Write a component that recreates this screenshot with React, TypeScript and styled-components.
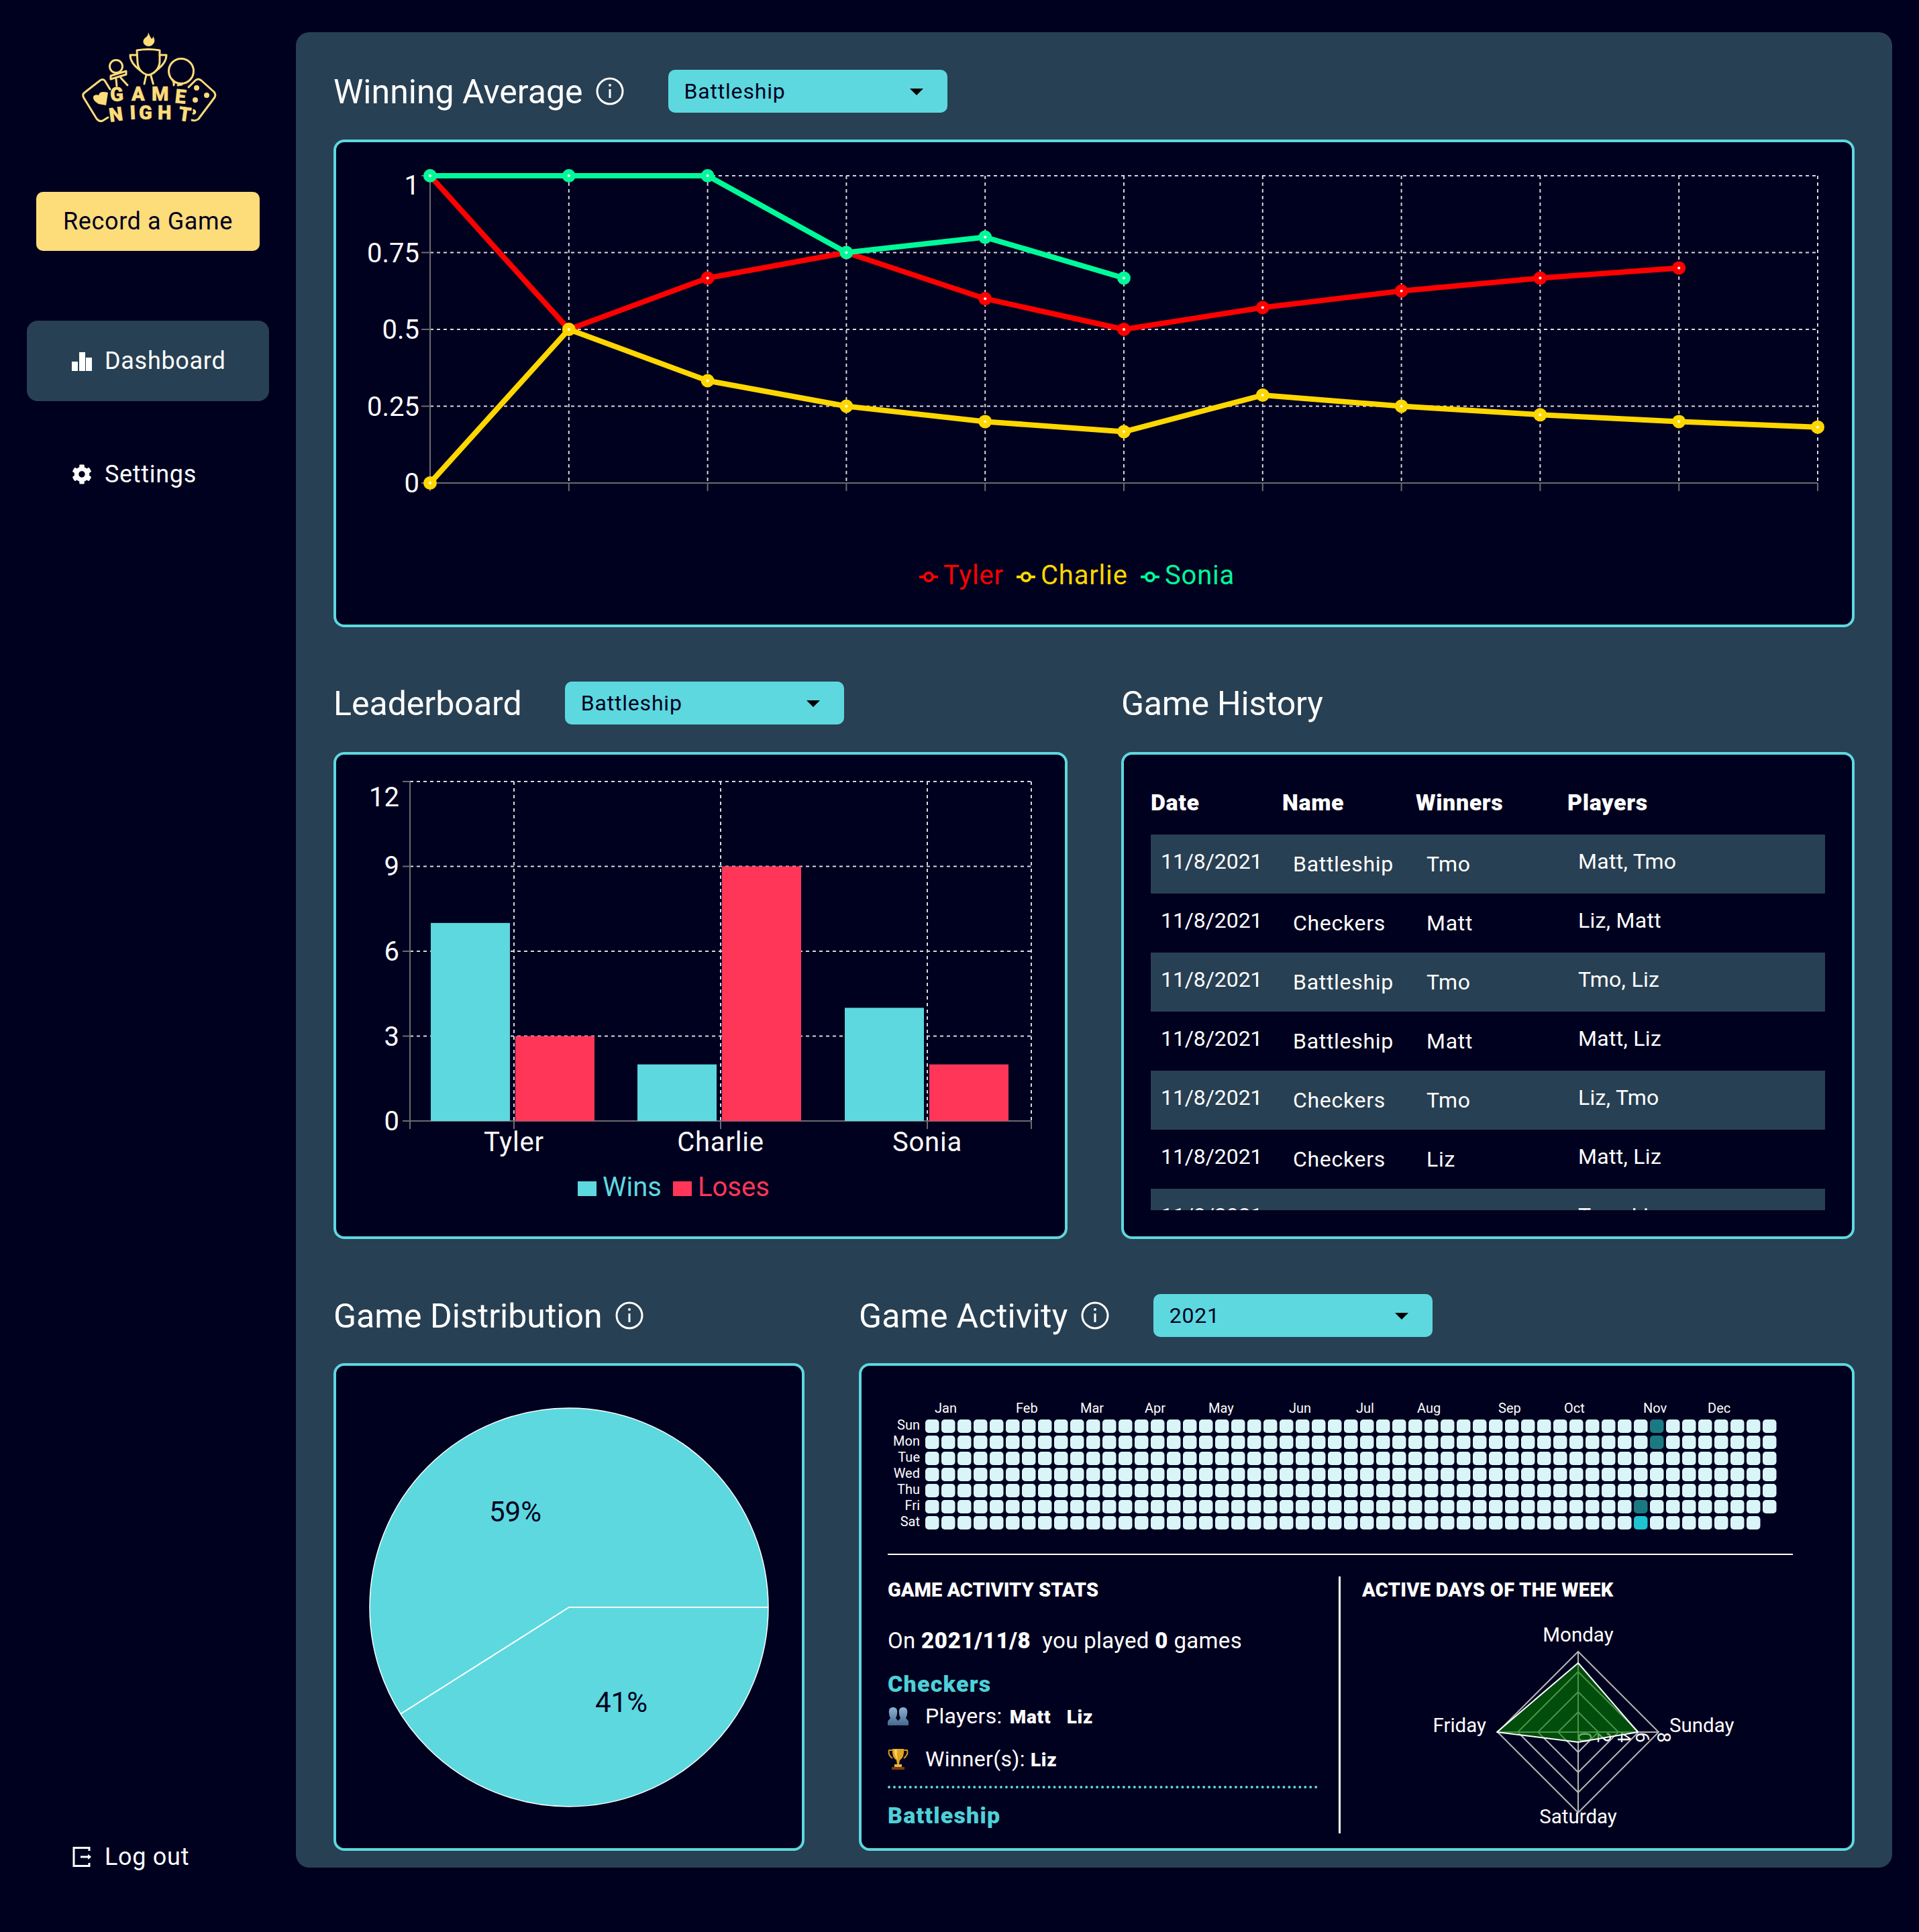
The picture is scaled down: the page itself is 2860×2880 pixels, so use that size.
import React from 'react';
import styled, { createGlobalStyle } from 'styled-components';
import { FaCog } from 'react-icons/fa';

const NAVY = '#00001f';
const SLATE = '#284053';
const TEAL = '#5dd8df';
const YELLOW = '#fddc7a';
const FONT = 'Roboto, "Open Sans", sans-serif';

const GlobalStyle = createGlobalStyle`
  html, body {
    margin: 0;
    padding: 0;
    background: ${NAVY};
    font-family: ${FONT};
    color: #fff;
  }
  * {
    box-sizing: border-box;
  }
`;

const Page = styled.div`
  display: flex;
  width: 2860px;
  height: 2880px;
  background: ${NAVY};
`;

const Sidebar = styled.aside`
  width: 441px;
  flex-shrink: 0;
  display: flex;
  flex-direction: column;
  padding: 30px 40px 52px 40px;
`;

const LogoBox = styled.div`
  height: 186px;
  display: flex;
  justify-content: center;
`;

const RecordButton = styled.button`
  width: 333px;
  height: 88px;
  margin: 70px 0 0 14px;
  border: 0;
  border-radius: 10px;
  background: ${YELLOW};
  color: ${NAVY};
  font-family: ${FONT};
  font-size: 36px;
  letter-spacing: 0.6px;
`;

const NavItem = styled.div<{ $active?: boolean }>`
  display: flex;
  align-items: center;
  gap: 19px;
  height: 120px;
  padding-left: 67px;
  border-radius: 16px;
  font-size: 36px;
  letter-spacing: 0.7px;
  background: ${(p) => (p.$active ? SLATE : 'transparent')};
  margin-top: ${(p) => (p.$active ? '104px' : '49px')};
  svg {
    width: 30px;
    height: 30px;
    flex-shrink: 0;
  }
`;

const LogoutItem = styled(NavItem)`
  margin-top: auto;
`;

const Panel = styled.main`
  width: 2379px;
  height: 2736px;
  margin-top: 48px;
  padding: 56px 56px 25px 56px;
  background: ${SLATE};
  border-radius: 20px;
`;

const Section = styled.section<{ $bottom: number }>`
  margin-bottom: ${(p) => p.$bottom}px;
`;

const Split = styled.div<{ $left: number; $gap: number }>`
  display: grid;
  grid-template-columns: ${(p) => p.$left}px 1fr;
  column-gap: ${(p) => p.$gap}px;
`;

const HeadRow = styled.div<{ $bottom: number }>`
  display: flex;
  align-items: center;
  height: 64px;
  margin-bottom: ${(p) => p.$bottom}px;
`;

const Title = styled.h2<{ $gap?: number; $spacing?: number }>`
  margin: 1px ${(p) => p.$gap ?? 0}px 0 0;
  font-size: 50px;
  font-weight: 400;
  letter-spacing: ${(p) => p.$spacing ?? 0}px;
  line-height: 62px;
  white-space: nowrap;
`;

const InfoMark = styled.svg`
  width: 42px;
  height: 42px;
  margin-left: 19px;
  margin-right: 66px;
  flex-shrink: 0;
`;

const Select = styled.div`
  position: relative;
  width: 416px;
  height: 64px;
  padding-left: 24px;
  border-radius: 10px;
  background: ${TEAL};
  color: ${NAVY};
  font-size: 32px;
  letter-spacing: 0.8px;
  line-height: 64px;
  &::after {
    content: '';
    position: absolute;
    right: 36px;
    top: 28px;
    border-left: 10px solid transparent;
    border-right: 10px solid transparent;
    border-top: 10px solid #000;
  }
`;

const Card = styled.div<{ $height: number }>`
  height: ${(p) => p.$height}px;
  border: 4px solid ${TEAL};
  border-radius: 16px;
  background: ${NAVY};
  overflow: hidden;
`;

const ChartSvg = styled.svg`
  display: block;
  font-family: ${FONT};
`;

const ChartLabel = styled.text`
  font-size: 40px;
  letter-spacing: 0.8px;
`;

const LegendLabel = styled.text`
  font-size: 40px;
`;

const TableCard = styled(Card)`
  padding: 23px 40px 0 40px;
`;

const TableClip = styled.div`
  height: 656px;
  overflow: hidden;
`;

const GameTable = styled.table`
  width: 100%;
  table-layout: fixed;
  border-collapse: collapse;
`;

const HeadCell = styled.th<{ $width?: number }>`
  width: ${(p) => (p.$width ? `${p.$width}px` : 'auto')};
  height: 96px;
  padding: 0;
  text-align: left;
  font-size: 34px;
  font-weight: 900;
  letter-spacing: 0.6px;
`;

const Row = styled.tr`
  height: 88px;
  &:nth-child(odd) {
    background: ${SLATE};
  }
`;

const Cell = styled.td`
  padding: 0 0 0 16px;
  font-size: 32px;
  letter-spacing: 0.7px;
`;

const RaisedCell = styled(Cell)`
  padding-bottom: 8px;
  letter-spacing: 0.3px;
`;

const DateCell = styled(RaisedCell)`
  padding-left: 15px;
  letter-spacing: -0.1px;
`;

const ActivityCard = styled(Card)`
  padding: 0 39px;
  display: flex;
  flex-direction: column;
`;

const Rule = styled.hr`
  width: 1349px;
  height: 2px;
  flex-shrink: 0;
  margin: 18px 0 32px;
  border: 0;
  background: #fff;
`;

const StatsRow = styled.div`
  display: flex;
  height: 383px;
`;

const StatsLeft = styled.div`
  width: 641px;
  margin-right: 31px;
`;

const StatsRight = styled.div`
  flex: 1;
  border-left: 3px solid #fff;
  padding-left: 32px;
`;

const StatsTitle = styled.h3`
  margin: 0;
  font-size: 29px;
  line-height: 40px;
  font-weight: 900;
  white-space: nowrap;
`;

const ActiveTitle = styled(StatsTitle)`
  letter-spacing: 0.3px;
`;

const Summary = styled.p`
  margin: 36px 0 0;
  font-size: 33px;
  letter-spacing: 0.3px;
  line-height: 40px;
  white-space: pre;
  b {
    font-weight: 900;
    letter-spacing: 0.7px;
  }
`;

const GameName = styled.div<{ $top: number }>`
  margin-top: ${(p) => p.$top}px;
  font-size: 34px;
  letter-spacing: 1.2px;
  line-height: 40px;
  font-weight: 900;
  color: #4fd0d8;
`;

const DetailRow = styled.div<{ $top: number }>`
  display: flex;
  align-items: center;
  gap: 25px;
  margin-top: ${(p) => p.$top}px;
  height: 40px;
  font-size: 32px;
  letter-spacing: 0.3px;
  white-space: pre;
  b {
    font-size: 28px;
    font-weight: 900;
    letter-spacing: 0.7px;
  }
  svg {
    flex-shrink: 0;
  }
`;

const PlayerNames = styled.b`
  margin-left: 3px;
  word-spacing: 4px;
`;

const Dotted = styled.div`
  margin-top: 20px;
  border-top: 4px dotted ${TEAL};
`;

const InfoIcon = () => (
  <InfoMark viewBox="0 0 42 42" fill="none" stroke="#fff">
    <circle cx="21" cy="21" r="19" strokeWidth="3" />
    <path d="M21 18 V31" strokeWidth="3" />
    <circle cx="21" cy="12" r="2" fill="#fff" stroke="none" />
  </InfoMark>
);

const Logo = () => (
  <svg viewBox="0 0 240 170" width="240" height="170">
    <g fill="none" stroke={YELLOW} strokeWidth="3" strokeLinecap="round" strokeLinejoin="round">
      <path d="M63 103 L55 90 Q52 87 48 90 L25 108 Q21 111 24 116 L43 147 Q47 152 52 150 L60 145" />
      <path d="M180 100 L190 90 Q194 86 199 90 L218 107 Q221 111 219 115 L195 147 Q191 151 185 149" />
      <circle cx="72" cy="69" r="9.5" />
      <path d="M64 83 L87 76 L87 81 L64 88 Z" />
      <path d="M72 88 L73 98 M79 86 L89 97" />
      <path d="M103 45 Q120 42 137 45 L137 63 Q135 78 120 82 Q105 78 104 63 Z" />
      <path d="M103 52 L93 52 Q93 64 108 75 M137 52 L147 52 Q147 64 132 75" />
      <path d="M116.7 83 L114 95 M124 83 L127.3 95" />
      <circle cx="169" cy="76" r="18.5" />
      <path d="M156 89 Q159 93 158 97 M170 96 L164 97" />
    </g>
    <path d="M120 18 C122 24 124 26 125 28 C127 27 127 25 127 24 C130 28 130 33 127 36 C124 40 117 40 114 36 C111 32 113 28 116 26 C119 24 120 21 120 18 Z" fill={YELLOW} />
    <path d="M60 108 L57 127 L46 125 Q37 120 38 114 Q40 110 46 112 Q47 107 53 107 Q57 107 60 108 Z" fill={YELLOW} />
    <g fill={YELLOW}>
      <circle cx="192" cy="101" r="4" />
      <circle cx="207" cy="112" r="4" />
      <circle cx="190" cy="119" r="4" />
      <path d="M186 133 a4 4 0 1 1 -1 7 q3 -3 1 -7 Z" />
    </g>
    <g fill={YELLOW} stroke={YELLOW} strokeWidth="0.5" fontFamily={FONT} fontWeight="900" fontSize="29">
      <text transform="translate(64 121.5) rotate(-5)">G</text>
      <text transform="translate(95 120)">A</text>
      <text transform="translate(125 119.5)">M</text>
      <text transform="translate(159 123) rotate(6)">E</text>
      <text transform="translate(63 152) rotate(-8)">N</text>
      <text transform="translate(93 148) rotate(-3)">I</text>
      <text transform="translate(106 148)">G</text>
      <text transform="translate(134 148)">H</text>
      <text transform="translate(164 149) rotate(8)">T</text>
    </g>
  </svg>
);

const BarsIcon = () => (
  <svg viewBox="0 0 30 30" fill="#fff">
    <rect x="0" y="16" width="9" height="14" />
    <rect x="11" y="2" width="9" height="28" />
    <rect x="21" y="10" width="9" height="20" />
  </svg>
);

const LogoutIcon = () => (
  <svg viewBox="0 0 30 30" fill="none" stroke="#fff" strokeWidth="3">
    <path d="M26 6 V1.5 H3 V28.5 H26 V24" />
    <path d="M13 15 H28" />
    <path d="M24 11 L29 15 L24 19 Z" fill="#fff" stroke="none" />
  </svg>
);

const PeopleIcon = () => (
  <svg width="31" height="27" viewBox="0 0 31 27">
    <defs>
      <linearGradient id="ppl" x1="0" y1="0" x2="0" y2="1">
        <stop offset="0" stopColor="#8db3d3" />
        <stop offset="1" stopColor="#44688e" />
      </linearGradient>
    </defs>
    <path d="M8 0 C13 0 15 4 14 9 C14 12 13 14 12 16 C13 18 15 19 16 21 L16 27 L0 27 L0 21 C1 19 3 18 4 16 C3 14 2 12 2 9 C1 4 3 0 8 0 Z" fill="url(#ppl)" />
    <path d="M23 0 C28 0 30 4 29 9 C29 12 28 14 27 16 C28 18 30 19 31 21 L31 27 L15 27 L15 21 C16 19 18 18 19 16 C18 14 17 12 17 9 C16 4 18 0 23 0 Z" fill="url(#ppl)" />
  </svg>
);

const TrophyIcon = () => (
  <svg width="31" height="32" viewBox="0 0 31 32">
    <path d="M7 3 H2 Q0 10 7 15 M24 3 H29 Q31 10 24 15" fill="none" stroke="#d59a1c" strokeWidth="2" />
    <path d="M7 1 H24 Q25 14 18 18 L17 24 H14 L13 18 Q6 14 7 1 Z" fill="#e0a51f" />
    <path d="M10 2 H14 Q13 12 15 17 Q10 13 10 2 Z" fill="#f6d667" />
    <rect x="10" y="24" width="11" height="4" fill="#eab741" />
    <rect x="6" y="28" width="19" height="4" fill="#7a3b10" />
  </svg>
);

// winning average chart
const X0 = 641;
const XSTEP = 206.8;
const avgX = (i: number) => X0 + i * XSTEP;
const avgY = (v: number) => 720 - 458 * v;
const avgSeries = [
  { name: 'Tyler', color: '#ff0000', data: [1, 0.5, 0.667, 0.75, 0.6, 0.5, 0.571, 0.625, 0.667, 0.7] },
  { name: 'Charlie', color: '#ffd700', data: [0, 0.5, 0.333, 0.25, 0.2, 0.167, 0.286, 0.25, 0.222, 0.2, 0.182] },
  { name: 'Sonia', color: '#00fa9a', data: [1, 1, 1, 0.75, 0.8, 0.667] },
];
const avgTicks: [number, string, number][] = [
  [1, '1', 276],
  [0.75, '0.75', 377],
  [0.5, '0.5', 491],
  [0.25, '0.25', 606],
  [0, '0', 720],
];
const legendMarks = [
  { name: 'Tyler', color: '#ff0000', x: 1370, tx: 1406 },
  { name: 'Charlie', color: '#ffd700', x: 1515, tx: 1551 },
  { name: 'Sonia', color: '#00fa9a', x: 1700, tx: 1736 },
];

const GRID = '#d8d8e0';
const AXIS = '#6b6b70';

const AverageChart = () => (
  <ChartSvg viewBox="501 212 2258 719" width="2258" height="719">
    {avgTicks.map(([v]) => (
      <g key={v}>
        <line x1={628} x2={X0} y1={avgY(v)} y2={avgY(v)} stroke={AXIS} strokeWidth="2" />
        {v > 0 && <line x1={X0} x2={avgX(10)} y1={avgY(v)} y2={avgY(v)} stroke={GRID} strokeWidth="2" strokeDasharray="5 5" />}
      </g>
    ))}
    <line x1={X0} x2={avgX(10)} y1={720} y2={720} stroke={AXIS} strokeWidth="2" />
    <line x1={X0} x2={X0} y1={262} y2={732} stroke={AXIS} strokeWidth="2" />
    {Array.from({ length: 10 }, (_, i) => i + 1).map((i) => (
      <g key={i}>
        <line x1={avgX(i)} x2={avgX(i)} y1={262} y2={720} stroke={GRID} strokeWidth="2" strokeDasharray="5 5" />
        <line x1={avgX(i)} x2={avgX(i)} y1={720} y2={732} stroke={AXIS} strokeWidth="2" />
      </g>
    ))}
    {avgTicks.map(([v, label, y]) => (
      <text key={label} x={625} y={y + 14} textAnchor="end" fill="#fff" fontSize="40">{label}</text>
    ))}
    {avgSeries.map((s) => (
      <g key={s.name}>
        <polyline
          points={s.data.map((v, i) => `${avgX(i)},${avgY(v)}`).join(' ')}
          fill="none"
          stroke={s.color}
          strokeWidth="8"
          strokeLinejoin="round"
        />
        {s.data.map((v, i) => (
          <g key={i}>
            <circle cx={avgX(i)} cy={avgY(v)} r="10" fill={s.color} />
            <circle cx={avgX(i)} cy={avgY(v)} r="2" fill="#fff" />
          </g>
        ))}
      </g>
    ))}
    {legendMarks.map((m) => (
      <g key={m.name}>
        <line x1={m.x} x2={m.x + 28} y1={860} y2={860} stroke={m.color} strokeWidth="4" />
        <circle cx={m.x + 14} cy={860} r="6" fill={NAVY} stroke={m.color} strokeWidth="4" />
        <ChartLabel x={m.tx} y={871} fill={m.color}>{m.name}</ChartLabel>
      </g>
    ))}
  </ChartSvg>
);

// leaderboard chart
const LB_BOTTOM = 1671;
const lbUnit = (1671 - 1165) / 12;
const lbBars = [
  { x: 642, value: 7, color: TEAL },
  { x: 768, value: 3, color: '#ff3658' },
  { x: 950, value: 2, color: TEAL },
  { x: 1076, value: 9, color: '#ff3658' },
  { x: 1259, value: 4, color: TEAL },
  { x: 1385, value: 2, color: '#ff3658' },
];
const lbTicks: [number, number][] = [
  [12, 1188],
  [9, 1291],
  [6, 1418],
  [3, 1545],
  [0, 1671],
];
const lbLabels: [number, string][] = [
  [766, 'Tyler'],
  [1074, 'Charlie'],
  [1382, 'Sonia'],
];

const LeaderboardChart = () => (
  <ChartSvg viewBox="501 1125 1086 718" width="1086" height="718">
    {[12, 9, 6, 3].map((v) => (
      <g key={v}>
        <line x1={600} x2={611} y1={LB_BOTTOM - v * lbUnit} y2={LB_BOTTOM - v * lbUnit} stroke={AXIS} strokeWidth="2" />
        <line x1={611} x2={1537} y1={LB_BOTTOM - v * lbUnit} y2={LB_BOTTOM - v * lbUnit} stroke={GRID} strokeWidth="2" strokeDasharray="5 5" />
      </g>
    ))}
    {[766, 1074, 1382, 1537].map((x) => (
      <g key={x}>
        <line x1={x} x2={x} y1={1165} y2={LB_BOTTOM} stroke={GRID} strokeWidth="2" strokeDasharray="5 5" />
        <line x1={x} x2={x} y1={LB_BOTTOM} y2={1683} stroke={AXIS} strokeWidth="2" />
      </g>
    ))}
    <line x1={611} x2={611} y1={1165} y2={1683} stroke={AXIS} strokeWidth="2" />
    <line x1={600} x2={1537} y1={LB_BOTTOM} y2={LB_BOTTOM} stroke={AXIS} strokeWidth="2" />
    {lbBars.map((b) => (
      <rect key={b.x} x={b.x} y={LB_BOTTOM - b.value * lbUnit} width={118} height={b.value * lbUnit} fill={b.color} />
    ))}
    {lbTicks.map(([v, y]) => (
      <text key={v} x={595} y={y + 14} textAnchor="end" fill="#fff" fontSize="40">{v}</text>
    ))}
    {lbLabels.map(([x, label]) => (
      <ChartLabel key={label} x={x} y={1716} textAnchor="middle" fill="#fff">{label}</ChartLabel>
    ))}
    <rect x={861} y={1761} width={28} height={22} fill={TEAL} />
    <LegendLabel x={898} y={1783} fill={TEAL}>Wins</LegendLabel>
    <rect x={1003} y={1761} width={28} height={22} fill="#ff3658" />
    <LegendLabel x={1040} y={1783} fill="#ff3658">Loses</LegendLabel>
  </ChartSvg>
);

const PieChart = () => (
  <ChartSvg viewBox="501 2036 694 719" width="694" height="719">
    <circle cx={848} cy={2396} r={297} fill={TEAL} stroke="#fff" strokeWidth="1.5" />
    <path d="M1145 2396 L848 2396 L597 2555" fill="none" stroke="#fff" strokeWidth="2" />
    <text x={768} y={2268} textAnchor="middle" fill={NAVY} fontSize="42">59%</text>
    <text x={926} y={2552} textAnchor="middle" fill={NAVY} fontSize="42">41%</text>
  </ChartSvg>
);

// activity heat map
const HX = 1379;
const HY = 2116;
const months: [string, number][] = [
  ['Jan', 1393], ['Feb', 1514], ['Mar', 1610], ['Apr', 1706], ['May', 1801], ['Jun', 1921],
  ['Jul', 2021], ['Aug', 2112], ['Sep', 2233], ['Oct', 2331], ['Nov', 2449], ['Dec', 2545],
];
const weekDays = ['Sun', 'Mon', 'Tue', 'Wed', 'Thu', 'Fri', 'Sat'];
const heatColor = (col: number, row: number) => {
  if (col === 45 && row < 2) return '#1a7a82';
  if (col === 44 && row === 5) return '#1a7a82';
  if (col === 44 && row === 6) return '#1fc4d2';
  return '#d9f5f7';
};

const HeatMap = () => (
  <ChartSvg viewBox="1323 2036 1398 262" width="1398" height="262" style={{ flexShrink: 0 }}>
    {months.map(([m, x]) => (
      <text key={m} x={x} y={2106} fill="#fff" fontSize="20">{m}</text>
    ))}
    {weekDays.map((d, r) => (
      <text key={d} x={1371} y={HY + r * 24 + 15} textAnchor="end" fill="#fff" fontSize="20">{d}</text>
    ))}
    {Array.from({ length: 53 }, (_, c) =>
      weekDays.map((d, r) =>
        c === 52 && r === 6 ? null : (
          <rect key={`${c}-${r}`} x={HX + c * 24} y={HY + r * 24} width={20.5} height={20} rx={5} fill={heatColor(c, r)} />
        ),
      ),
    )}
  </ChartSvg>
);

// radar chart
const RX = 2352;
const RY = 2582;
const diamond = (n: number, e: number, s: number, w: number) =>
  `${RX},${RY - n} ${RX + e},${RY} ${RX},${RY + s} ${RX - w},${RY}`;
const radarTicks: [string, number][] = [
  ['0', 2362],
  ['2', 2391],
  ['4', 2421],
  ['6', 2448],
  ['8', 2480],
];

const RadarChart = () => (
  <ChartSvg viewBox="2030 2390 670 343" width="670" height="343">
    {radarTicks.map(([t, x]) => (
      <text key={t} transform={`translate(${x - 10} 2582) rotate(90)`} fill="#fff" fontSize="28">{t}</text>
    ))}
    {[30, 60, 90, 120].map((r) => (
      <polygon key={r} points={diamond(r, r, r, r)} fill="none" stroke="#b5b5b5" strokeWidth="2" />
    ))}
    <line x1={RX} x2={RX} y1={RY - 120} y2={RY + 120} stroke="#b5b5b5" strokeWidth="2" />
    <line x1={RX - 120} x2={RX + 120} y1={RY} y2={RY} stroke="#b5b5b5" strokeWidth="2" />
    <polygon points={diamond(103, 89, 15, 121)} fill="#008000" fillOpacity="0.6" stroke="#fff" strokeWidth="2" strokeLinejoin="round" />
    <text x={RX} y={2447} textAnchor="middle" fill="#fff" fontSize="29.5">Monday</text>
    <text x={2488} y={2582} fill="#fff" fontSize="29.5">Sunday</text>
    <text x={RX} y={2718} textAnchor="middle" fill="#fff" fontSize="29.5">Saturday</text>
    <text x={2215} y={2582} textAnchor="end" fill="#fff" fontSize="29.5">Friday</text>
  </ChartSvg>
);

const games = [
  ['Battleship', 'Tmo', 'Matt, Tmo'],
  ['Checkers', 'Matt', 'Liz, Matt'],
  ['Battleship', 'Tmo', 'Tmo, Liz'],
  ['Battleship', 'Matt', 'Matt, Liz'],
  ['Checkers', 'Tmo', 'Liz, Tmo'],
  ['Checkers', 'Liz', 'Matt, Liz'],
  ['Battleship', 'Tmo', 'Tmo, Liz'],
];

const App: React.FC = () => (
  <Page>
    <GlobalStyle />
    <Sidebar>
      <LogoBox>
        <Logo />
      </LogoBox>
      <RecordButton>Record a Game</RecordButton>
      <NavItem $active>
        <BarsIcon />
        Dashboard
      </NavItem>
      <NavItem>
        <FaCog />
        Settings
      </NavItem>
      <LogoutItem>
        <LogoutIcon />
        Log out
      </LogoutItem>
    </Sidebar>
    <Panel>
      <Section $bottom={81}>
        <HeadRow $bottom={40}>
          <Title>Winning Average</Title>
          <InfoIcon />
          <Select>Battleship</Select>
        </HeadRow>
        <Card $height={727}>
          <AverageChart />
        </Card>
      </Section>
      <Section $bottom={82}>
        <Split $left={1094} $gap={80}>
          <div>
            <HeadRow $bottom={41}>
              <Title $gap={64}>Leaderboard</Title>
              <Select>Battleship</Select>
            </HeadRow>
            <Card $height={726}>
              <LeaderboardChart />
            </Card>
          </div>
          <div>
            <HeadRow $bottom={41}>
              <Title $spacing={-0.2}>Game History</Title>
            </HeadRow>
            <TableCard $height={726}>
              <TableClip>
                <GameTable>
                  <thead>
                    <tr>
                      <HeadCell $width={196}>Date</HeadCell>
                      <HeadCell $width={199}>Name</HeadCell>
                      <HeadCell $width={226}>Winners</HeadCell>
                      <HeadCell>Players</HeadCell>
                    </tr>
                  </thead>
                  <tbody>
                    {games.map(([name, winner, players], i) => (
                      <Row key={i}>
                        <DateCell>11/8/2021</DateCell>
                        <Cell>{name}</Cell>
                        <Cell>{winner}</Cell>
                        <RaisedCell>{players}</RaisedCell>
                      </Row>
                    ))}
                  </tbody>
                </GameTable>
              </TableClip>
            </TableCard>
          </div>
        </Split>
      </Section>
      <Split $left={702} $gap={81}>
        <div>
          <HeadRow $bottom={39}>
            <Title>Game Distribution</Title>
            <InfoIcon />
          </HeadRow>
          <Card $height={727}>
            <PieChart />
          </Card>
        </div>
        <div>
          <HeadRow $bottom={39}>
            <Title $spacing={0.3}>Game Activity</Title>
            <InfoIcon />
            <Select>2021</Select>
          </HeadRow>
          <ActivityCard $height={727}>
            <HeatMap />
            <Rule />
            <StatsRow>
              <StatsLeft>
                <StatsTitle>GAME ACTIVITY STATS</StatsTitle>
                <Summary>
                  On <b>2021/11/8</b>{'  '}you played <b>0</b> games
                </Summary>
                <GameName $top={24}>Checkers</GameName>
                <DetailRow $top={8}>
                  <PeopleIcon />
                  <span>
                    Players: <PlayerNames>Matt{'  '}Liz</PlayerNames>
                  </span>
                </DetailRow>
                <DetailRow $top={24}>
                  <TrophyIcon />
                  <span>
                    Winner(s): <b>Liz</b>
                  </span>
                </DetailRow>
                <Dotted />
                <GameName $top={20}>Battleship</GameName>
              </StatsLeft>
              <StatsRight>
                <ActiveTitle>ACTIVE DAYS OF THE WEEK</ActiveTitle>
                <RadarChart />
              </StatsRight>
            </StatsRow>
          </ActivityCard>
        </div>
      </Split>
    </Panel>
  </Page>
);

export default App;
